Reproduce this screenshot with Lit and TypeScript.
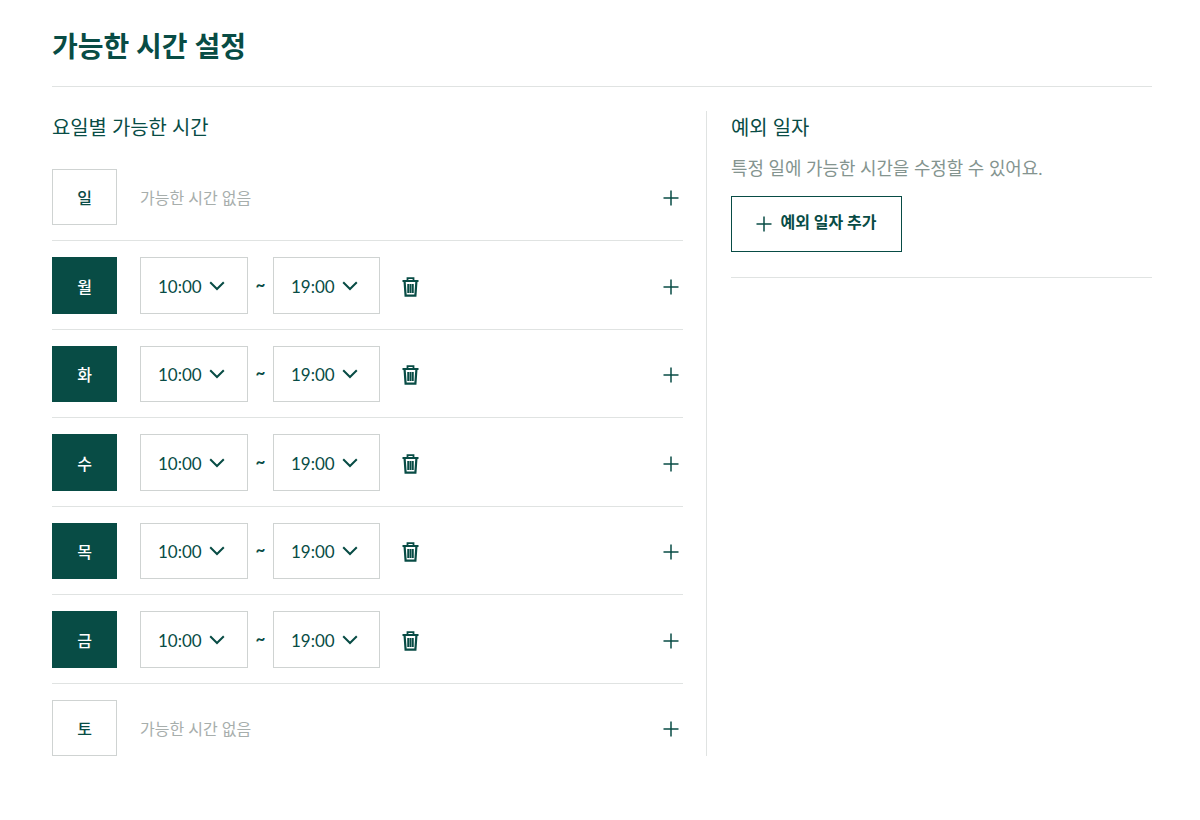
import { LitElement, html, css } from "lit";
import { customElement } from "lit/decorators.js";

const plus = (s: number) => html`<svg width=${s} height=${s} viewBox="0 0 16 16" fill="none" stroke="#084c45" stroke-width="1.5"><path d="M8 0.5V15.5M0.5 8H15.5"/></svg>`;
const chevron = html`<svg width="16" height="10" viewBox="0 0 16 10" fill="none" stroke="#084c45" stroke-width="2"><path d="M1.2 1.2L8 8L14.8 1.2"/></svg>`;
const trash = html`<svg width="17" height="20" viewBox="0 0 17 20" fill="none" stroke="#084c45"><path stroke-width="1.8" d="M0.5 4H16.5M5.5 4V1.2H11.5V4"/><path stroke-width="2.2" d="M2.6 4.5L3.6 18.6H13.4L14.4 4.5"/><path stroke-width="1.9" d="M6.2 7V16M8.5 7V16M10.8 7V16"/></svg>`;

const days = [
  { d: "일", on: false },
  { d: "월", on: true },
  { d: "화", on: true },
  { d: "수", on: true },
  { d: "목", on: true },
  { d: "금", on: true },
  { d: "토", on: false },
];

@customElement("app-root")
export class AppRoot extends LitElement {
  static styles = css`
    :host {
      display: block;
      width: 1200px;
      height: 820px;
      box-sizing: border-box;
      padding: 0 48px 0 52px;
      background: #fff;
      color: #084c45;
      font-family: "Lato", "Noto Sans CJK KR", sans-serif;
      overflow: hidden;
    }
    .title {
      margin: 0;
      box-sizing: content-box;
      height: 60px;
      padding-top: 26px;
      font-size: 28px;
      line-height: 40px;
      font-weight: 700;
      border-bottom: 1px solid #e0e3e2;
    }
    .cols {
      display: flex;
      margin-top: 24px;
    }
    .left {
      width: 631px;
      padding-right: 23px;
      border-right: 1px solid #e0e3e2;
    }
    .right {
      flex: 1;
      padding-left: 24px;
    }
    h2 {
      margin: 0;
      font-size: 19.9px;
      line-height: 32px;
      font-weight: 400;
    }
    .rows {
      margin-top: 9.8px;
      display: flex;
      flex-direction: column;
    }
    .row {
      display: flex;
      align-items: center;
      padding: 16px 0 15px;
      border-bottom: 1px solid #e0e3e2;
    }
    .row:last-child {
      padding-bottom: 0;
      border-bottom: 0;
    }
    .day {
      width: 65px;
      height: 56.5px;
      box-sizing: border-box;
      display: flex;
      align-items: center;
      justify-content: center;
      font-size: 16px;
      font-weight: 500;
      border: 1px solid #cfd3d2;
      flex: none;
    }
    .day.on {
      background: #084c45;
      border-color: #084c45;
      color: #fff;
    }
    .none {
      margin-left: 23px;
      font-size: 16px;
      color: #a7aeac;
    }
    .sel {
      width: 107px;
      height: 56.5px;
      box-sizing: border-box;
      border: 1px solid #cfd3d2;
      display: flex;
      align-items: center;
      padding-left: 17px;
      gap: 7px;
      font-size: 17px;
      flex: none;
    }
    .sel.first {
      width: 108px;
      margin-left: 23px;
    }
    .sel span {
      margin-top: 1px;
    }
    .tilde {
      width: 25px;
      text-align: center;
      font-size: 17px;
      font-weight: 700;
      line-height: 20px;
      margin-top: -2px;
      flex: none;
    }
    .del {
      margin-left: 22px;
      margin-top: 2px;
      display: flex;
    }
    .add {
      margin-left: auto;
      margin-right: 4px;
      margin-top: 2px;
      display: flex;
    }
    .desc {
      margin: 12px 0 0;
      font-size: 17.9px;
      line-height: 26px;
      color: #84948f;
    }
    .btn {
      margin-top: 15px;
      width: 171px;
      height: 55.5px;
      box-sizing: border-box;
      border: 1px solid #084c45;
      background: #fff;
      color: #084c45;
      font-family: inherit;
      font-size: 16px;
      font-weight: 700;
      display: flex;
      align-items: center;
      justify-content: center;
      gap: 8px;
      padding: 0;
    }
    .btn span {
      margin-bottom: 5px;
    }
    .sep {
      margin-top: 25.5px;
      border-top: 1px solid #e0e3e2;
    }
  `;

  render() {
    return html`
      <h1 class="title">가능한 시간 설정</h1>
      <div class="cols">
        <section class="left">
          <h2>요일별 가능한 시간</h2>
          <div class="rows">
            ${days.map(
              (r) => html`<div class="row">
                <div class="day ${r.on ? "on" : ""}">${r.d}</div>
                ${r.on
                  ? html`<div class="sel first"><span>10:00</span>${chevron}</div>
                      <div class="tilde">~</div>
                      <div class="sel"><span>19:00</span>${chevron}</div>
                      <div class="del">${trash}</div>`
                  : html`<div class="none">가능한 시간 없음</div>`}
                <div class="add">${plus(16)}</div>
              </div>`
            )}
          </div>
        </section>
        <section class="right">
          <h2>예외 일자</h2>
          <p class="desc">특정 일에 가능한 시간을 수정할 수 있어요.</p>
          <button class="btn">${plus(16)}<span>예외 일자 추가</span></button>
          <div class="sep"></div>
        </section>
      </div>
    `;
  }
}
